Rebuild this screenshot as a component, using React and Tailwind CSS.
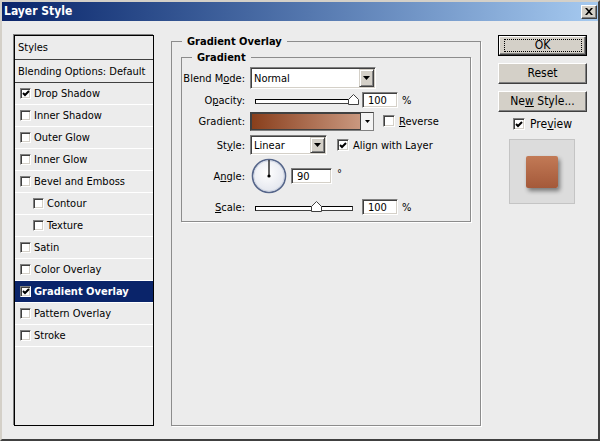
import React from 'react';

const font = "font-['DejaVu_Sans_Condensed','Liberation_Sans',sans-serif]";

const styleItems = [
  { label: 'Drop Shadow', on: true },
  { label: 'Inner Shadow' },
  { label: 'Outer Glow' },
  { label: 'Inner Glow' },
  { label: 'Bevel and Emboss' },
  { label: 'Contour', sub: true },
  { label: 'Texture', sub: true },
  { label: 'Satin' },
  { label: 'Color Overlay' },
  { label: 'Gradient Overlay', on: true, active: true },
  { label: 'Pattern Overlay' },
  { label: 'Stroke' },
];

function CheckBox({ on, small }) {
  return (
    <span
      className={`flex shrink-0 items-center justify-center bg-white border border-t-[#808080] border-l-[#808080] border-b-white border-r-white shadow-[inset_1px_1px_0_#404040,inset_-1px_-1px_0_#d4d0c8] ${
        small ? 'h-[11px] w-[11px]' : 'h-[12px] w-[12px]'
      }`}
    >
      {on && (
        <svg width="8" height="7" viewBox="0 0 8 7">
          <path d="M1 3l2 2 4-4" stroke="#000" strokeWidth="2" fill="none" />
        </svg>
      )}
    </span>
  );
}

function DropButton() {
  return (
    <span className="flex h-full w-[15px] shrink-0 items-center justify-center bg-[#d4d0c8] border border-t-[#d4d0c8] border-l-[#d4d0c8] border-b-[#404040] border-r-[#404040] shadow-[inset_1px_1px_0_#fff,inset_-1px_-1px_0_#808080]">
      <svg width="7" height="4" viewBox="0 0 7 4">
        <path d="M0 0h7L3.5 4z" fill="#000" />
      </svg>
    </span>
  );
}

function Select({ value, width }) {
  return (
    <div
      className={`flex h-full items-stretch bg-white border border-t-[#808080] border-l-[#808080] border-b-white border-r-white shadow-[inset_1px_1px_0_#404040,inset_-1px_-1px_0_#d4d0c8] p-[1px] ${width}`}
    >
      <span className="flex flex-1 items-center pl-[2px] pt-[1px]">{value}</span>
      <DropButton />
    </div>
  );
}

function Field({ value, width }) {
  return (
    <div
      className={`flex h-[16px] items-center bg-white border border-t-[#808080] border-l-[#808080] border-b-white border-r-white shadow-[inset_1px_1px_0_#404040,inset_-1px_-1px_0_#d4d0c8] pl-[5px] pt-[1px] ${width}`}
    >
      {value}
    </div>
  );
}

function Slider({ width, thumb }) {
  return (
    <div className="flex h-full items-center pl-[5px]">
      <div className={`relative mt-[3px] h-[5px] bg-white border border-t-black border-l-black border-b-[#404040] border-r-[#404040] ${width}`}>
        <svg
          className="absolute top-[-6px]"
          style={{ left: thumb }}
          width="11"
          height="11"
          viewBox="0 0 11 11"
        >
          <path d="M0.5 10.5V5.5L5.5 0.5L10.5 5.5V10.5Z" fill="#fff" stroke="#404040" />
        </svg>
      </div>
    </div>
  );
}

function Button({ children, focused }) {
  const inner = (
    <div className="flex h-full w-full items-center justify-center bg-[#d4d0c8] border border-t-white border-l-white border-b-[#404040] border-r-[#404040] shadow-[inset_-1px_-1px_0_#808080] text-[12px]">
      {focused ? (
        <span className="flex h-[13px] w-[78px] items-center justify-center border border-dotted border-black">
          {children}
        </span>
      ) : (
        children
      )}
    </div>
  );
  return (
    <div className={`h-[21px] w-[89px] ${focused ? 'border border-black' : ''}`}>{inner}</div>
  );
}

function Label({ children }) {
  return <div className="w-[63px] shrink-0 text-right">{children}</div>;
}

export default function App() {
  return (
    <div
      className={`flex h-[441px] w-[600px] flex-col overflow-hidden bg-[#ececec] border-2 border-t-[#d4d0c8] border-l-[#d4d0c8] border-b-[#404040] border-r-[#404040] text-[11px] leading-[13px] text-black ${font}`}
    >
      {/* Title bar */}
      <div className="flex h-[19px] shrink-0 items-center justify-between bg-linear-to-r from-[#0a246a] to-[#a6caf0] pl-[2px] pr-[1px]">
        <span className="text-[12px] font-bold text-white">Layer Style</span>
        <span className="flex h-[14px] w-[16px] items-center justify-center bg-[#d4d0c8] border border-t-white border-l-white border-b-[#404040] border-r-[#404040] shadow-[inset_-1px_-1px_0_#808080]">
          <svg width="8" height="7" viewBox="0 0 8 7">
            <path d="M0 0h2l2 2.2L6 0h2L5 3.5 8 7H6L4 4.8 2 7H0l3-3.5z" fill="#000" />
          </svg>
        </span>
      </div>

      {/* Body */}
      <div className="flex flex-1 pl-[12px] pt-[14px]">
        {/* Styles list */}
        <div className="flex h-[391px] w-[140px] shrink-0 flex-col border border-black shadow-[-1px_-1px_0_#808080]">
          <div className="flex h-[24px] items-center border-b border-[#404040] pl-[3px]">Styles</div>
          <div className="flex h-[23px] items-center border-b border-[#404040] pl-[3px]">Blending Options: Default</div>
          {styleItems.map((item) => (
            <div
              key={item.label}
              className={`flex h-[22px] items-center gap-[3px] border-b border-white ${
                item.sub ? 'pl-[18px]' : 'pl-[5px]'
              } ${item.active ? 'bg-[#0a246a] font-bold text-white' : ''}`}
            >
              <CheckBox on={item.on} small />
              <span>{item.label}</span>
            </div>
          ))}
        </div>

        {/* Gradient Overlay settings */}
        <fieldset className="ml-[17px] h-[391px] w-[310px] shrink-0 border border-[#8c8c8c] shadow-[1px_1px_0_#fff]">
          <legend className="ml-[10px] bg-[#ececec] px-[5px] font-bold leading-[13px]">Gradient Overlay</legend>
          <fieldset className="ml-[9px] mt-[3px] w-[290px] border border-[#8c8c8c] pb-[3px] shadow-[1px_1px_0_#fff]">
            <legend className="ml-[10px] bg-[#ececec] px-[5px] font-bold leading-[13px]">Gradient</legend>
            <div className="pt-[3px]">
              <div className="flex h-[22px] items-center">
                <Label>Blend M<u>o</u>de:</Label>
                <div className="ml-[5px] h-[22px]">
                  <Select value="Normal" width="w-[126px]" />
                </div>
              </div>

              <div className="flex h-[22px] items-center">
                <Label>O<u>p</u>acity:</Label>
                <div className="ml-[5px] flex h-full items-center">
                  <Slider width="w-[101px]" thumb={92} />
                  <div className="ml-[6px]">
                    <Field value="100" width="w-[36px]" />
                  </div>
                  <span className="ml-[4px]">%</span>
                </div>
              </div>

              <div className="flex h-[20px] items-center">
                <Label>Gradient:</Label>
                <div className="ml-[5px] flex h-[19px] w-[124px] border border-t-[#404040] border-l-[#404040] border-b-[#808080] border-r-[#808080] bg-[#f4f4f4]">
                  <div className="flex-1 border border-[#404040] bg-linear-to-r from-[#893f1b] to-[#c9987f]" />
                  <div className="flex w-[12px] items-center justify-center">
                    <svg width="5" height="3" viewBox="0 0 5 3">
                      <path d="M0 0h5L2.5 3z" fill="#000" />
                    </svg>
                  </div>
                </div>
                <div className="ml-[9px]">
                  <CheckBox />
                </div>
                <span className="ml-[4px]">
                  <u>R</u>everse
                </span>
              </div>

              <div className="mt-[4px] flex h-[20px] items-center">
                <Label>
                  St<u>y</u>le:
                </Label>
                <div className="ml-[5px] h-[20px]">
                  <Select value="Linear" width="w-[77px]" />
                </div>
                <div className="ml-[10px]">
                  <CheckBox on />
                </div>
                <span className="ml-[4px]">Align with Layer</span>
              </div>

              <div className="mt-[3px] flex h-[36px] items-center">
                <Label>
                  A<u>n</u>gle:
                </Label>
                <svg className="ml-[6px]" width="36" height="36" viewBox="0 0 36 36">
                  <defs>
                    <radialGradient id="dial" cx="45%" cy="40%" r="60%">
                      <stop offset="0%" stopColor="#ffffff" />
                      <stop offset="100%" stopColor="#e3e6ee" />
                    </radialGradient>
                  </defs>
                  <circle cx="18" cy="18" r="16.5" fill="url(#dial)" stroke="#56668a" strokeWidth="1.6" />
                  <circle cx="18" cy="18" r="15.2" fill="none" stroke="#c9d0df" strokeWidth="0.8" />
                  <line x1="18" y1="18" x2="18" y2="2" stroke="#000" strokeWidth="1.2" />
                  <circle cx="18" cy="18" r="1.6" fill="#000" />
                </svg>
                <div className="ml-[4px]">
                  <Field value="90" width="w-[41px]" />
                </div>
                <span className="mb-[6px] ml-[5px]">°</span>
              </div>

              <div className="mt-[2px] flex h-[22px] items-center">
                <Label>
                  <u>S</u>cale:
                </Label>
                <div className="ml-[5px] flex h-full items-center">
                  <Slider width="w-[98px]" thumb={55} />
                  <div className="ml-[9px]">
                    <Field value="100" width="w-[36px]" />
                  </div>
                  <span className="ml-[4px]">%</span>
                </div>
              </div>
            </div>
          </fieldset>
        </fieldset>

        {/* Buttons */}
        <div className="ml-[17px] flex w-[89px] shrink-0 flex-col">
          <Button focused>OK</Button>
          <div className="mt-[7px]">
            <Button>Reset</Button>
          </div>
          <div className="mt-[7px]">
            <Button>
              <span>
                Ne<u>w</u> Style...
              </span>
            </Button>
          </div>
          <div className="ml-[15px] mt-[6px] flex h-[12px] items-center gap-[5px] text-[12px]">
            <CheckBox on />
            <span>
              Pre<u>v</u>iew
            </span>
          </div>
          <div className="ml-[11px] mt-[9px] flex h-[65px] w-[66px] items-center justify-center border border-[#c4c4c4] bg-[#dcdcdc]">
            <div className="h-[32px] w-[32px] rounded-[2px] bg-linear-to-b from-[#c27a56] to-[#a4593a] shadow-[2px_3px_4px_rgba(0,0,0,0.45)]" />
          </div>
        </div>
      </div>
    </div>
  );
}
